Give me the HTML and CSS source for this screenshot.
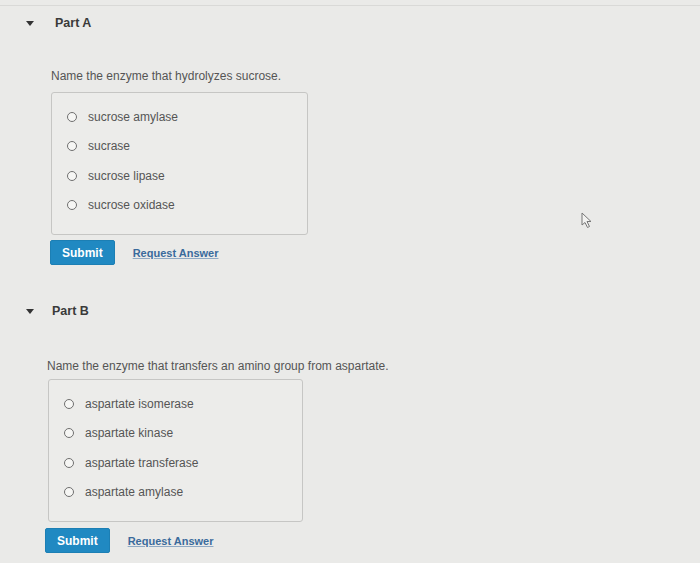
FILE: index.html
```html
<!DOCTYPE html>
<html lang="en">
<head>
    <meta charset="UTF-8">
    <meta name="viewport" content="width=device-width, initial-scale=1.0">
    <title>Parts A and B</title>
    <link rel="stylesheet" href="styles.css">
</head>
<body>

    <div class="sheet">

        <!-- Part A -->
        <section class="part">
            <div class="part-header">
                <span class="caret"></span>
                <span class="part-title">Part A</span>
            </div>
            <div class="part-body">
                <p class="question">Name the enzyme that hydrolyzes sucrose.</p>
                <div class="choices">
                    <label class="choice"><span class="radio"></span>sucrose amylase</label>
                    <label class="choice"><span class="radio"></span>sucrase</label>
                    <label class="choice"><span class="radio"></span>sucrose lipase</label>
                    <label class="choice"><span class="radio"></span>sucrose oxidase</label>
                </div>
                <div class="actions">
                    <button class="submit-btn">Submit</button>
                    <a class="request-link" href="#">Request Answer</a>
                </div>
            </div>
        </section>

        <!-- Part B -->
        <section class="part part-b">
            <div class="part-header">
                <span class="caret"></span>
                <span class="part-title">Part B</span>
            </div>
            <div class="part-body">
                <p class="question">Name the enzyme that transfers an amino group from aspartate.</p>
                <div class="choices">
                    <label class="choice"><span class="radio"></span>aspartate isomerase</label>
                    <label class="choice"><span class="radio"></span>aspartate kinase</label>
                    <label class="choice"><span class="radio"></span>aspartate transferase</label>
                    <label class="choice"><span class="radio"></span>aspartate amylase</label>
                </div>
                <div class="actions">
                    <button class="submit-btn">Submit</button>
                    <a class="request-link" href="#">Request Answer</a>
                </div>
            </div>
        </section>

    </div>

    <!-- Mouse pointer -->
    <svg class="pointer" width="12" height="17" viewBox="0 0 12 17">
        <path d="M1 1 L1 13 L4 10.5 L6.5 15.5 L8.5 14.5 L6 9.5 L10 9.5 Z" fill="#f2f2f0" stroke="#777" stroke-width="1"/>
    </svg>

</body>
</html>
```

FILE: styles.css
```css
/* General Page Style */
body {
    margin: 0;
    padding: 5px 0 0;
    background-color: #eaeae8;
    font-family: "Liberation Sans", Arial, sans-serif;
    color: #555;
}

.sheet {
    border-top: 1px solid #d9d9d7;
}

/* Part header */
.part-header {
    display: flex;
    align-items: center;
    padding: 9px 0 0 26px;
    height: 16px;
}

.caret {
    width: 0;
    height: 0;
    border-left: 4px solid transparent;
    border-right: 4px solid transparent;
    border-top: 5px solid #333;
    margin-right: 21px;
}

.part-title {
    font-size: 12.5px;
    font-weight: bold;
    color: #3a3a3a;
    line-height: 16px;
}

/* Part body */
.part-body {
    padding: 37px 0 29px 51px;
}

.question {
    margin: 0 0 8px;
    font-size: 12px;
    line-height: 16px;
}

/* Choice box */
.choices {
    width: 240px;
    padding: 9px 0 14px 15px;
    border: 1px solid #c6c6c4;
    border-radius: 3px;
    background-color: #ececea;
}

.choice {
    display: flex;
    align-items: center;
    height: 29.5px;
    font-size: 12px;
}

.radio {
    width: 8px;
    height: 8px;
    border: 1.5px solid #6f6f6f;
    border-radius: 50%;
    background-color: #f6f6f4;
    margin-right: 11px;
}

/* Submit row */
.actions {
    display: flex;
    align-items: center;
    margin-top: 5px;
    margin-left: -1px;
}

.submit-btn {
    height: 25px;
    padding: 0 11px;
    border: 1px solid #1c7fb4;
    border-radius: 2px;
    background-color: #2089c2;
    color: white;
    font-family: inherit;
    font-size: 12px;
    font-weight: bold;
}

.request-link {
    margin-left: 18px;
    font-size: 11px;
    font-weight: bold;
    color: #3a6b9c;
    text-decoration: underline;
    text-decoration-color: #8fa9c4;
}

/* Part B sits a little further left in the shot */
.part-b .part-body {
    padding-top: 39px;
    padding-left: 47px;
}

.part-b .part-title {
    margin-left: -3px;
}

.part-b .question {
    margin-bottom: 5px;
}

.part-b .choices {
    margin-left: 1px;
    width: 238px;
}

.part-b .actions {
    margin-left: -2px;
    margin-top: 6px;
}

/* Mouse pointer */
.pointer {
    position: absolute;
    left: 581px;
    top: 212px;
}
```
